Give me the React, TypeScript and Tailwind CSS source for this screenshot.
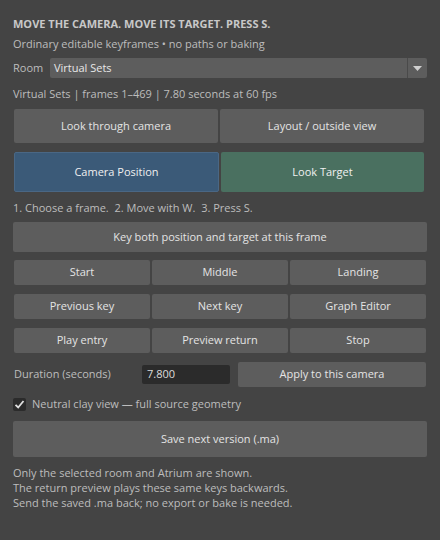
import React from "react";

const font = { fontFamily: '"Open Sans", "Noto Sans", sans-serif' };

function Btn({ children, className = "" }: { children: React.ReactNode; className?: string }) {
  return (
    <div
      className={`flex items-center justify-center rounded-[2px] bg-[#5d5d5d] text-[#e4e4e4] text-[11px] ${className}`}
    >
      {children}
    </div>
  );
}

export default function App() {
  return (
    <div
      className="w-[440px] h-[540px] bg-[#444444] pl-[13px] pr-[13px] flex flex-col text-[11px] text-[#bdbdbd] overflow-hidden"
      style={font}
    >
      <div className="mt-[16px] h-[16px] leading-[16px] font-bold text-[#c8c8c8] text-[11px]">
        MOVE THE CAMERA. MOVE ITS TARGET. PRESS S.
      </div>
      <div className="mt-[4px] h-[16px] leading-[16px]">Ordinary editable keyframes • no paths or baking</div>
      <div className="mt-[6px] h-[20px] flex items-center">
        <div className="w-[37px]">Room</div>
        <div className="flex-1 h-[20px] flex rounded-[2px] bg-[#5d5d5d]">
          <div className="flex-1 flex items-center pl-[4px] text-[#e8e8e8]">Virtual Sets</div>
          <div className="w-[20px] h-full border-l border-[#4a4a4a] flex items-center justify-center">
            <svg width="9" height="5" viewBox="0 0 9 5">
              <polygon points="0,0 9,0 4.5,5" fill="#d0d0d0" />
            </svg>
          </div>
        </div>
      </div>
      <div className="mt-[8px] h-[16px] leading-[16px]">Virtual Sets | frames 1–469 | 7.80 seconds at 60 fps</div>
      <div className="mt-[7px] flex gap-[2px] pl-[1px] pr-[3px]">
        <Btn className="flex-1 h-[34px]">Look through camera</Btn>
        <Btn className="flex-1 h-[34px]">Layout / outside view</Btn>
      </div>
      <div className="mt-[9px] flex gap-[2px] pl-[1px] pr-[3px]">
        <Btn className="flex-1 h-[40px] !bg-[#3b5a78] border border-[#4a6784] text-[#f0f0f0]">Camera Position</Btn>
        <Btn className="flex-1 h-[40px] !bg-[#4a7060] text-[#f0f0f0]">Look Target</Btn>
      </div>
      <div className="mt-[8px] h-[16px] leading-[16px]">1. Choose a frame.&nbsp; 2. Move with W.&nbsp; 3. Press S.</div>
      <Btn className="mt-[6px] h-[30px]">Key both position and target at this frame</Btn>
      <div className="mt-[8px] grid grid-cols-3 gap-[2px] pl-[1px] pr-px">
        <Btn className="h-[25px]">Start</Btn>
        <Btn className="h-[25px]">Middle</Btn>
        <Btn className="h-[25px]">Landing</Btn>
      </div>
      <div className="mt-[9px] grid grid-cols-3 gap-[2px] pl-[1px] pr-px">
        <Btn className="h-[25px]">Previous key</Btn>
        <Btn className="h-[25px]">Next key</Btn>
        <Btn className="h-[25px]">Graph Editor</Btn>
      </div>
      <div className="mt-[9px] grid grid-cols-3 gap-[2px] pl-[1px] pr-px">
        <Btn className="h-[25px]">Play entry</Btn>
        <Btn className="h-[25px]">Preview return</Btn>
        <Btn className="h-[25px]">Stop</Btn>
      </div>
      <div className="mt-[9px] h-[25px] flex items-center pl-[1px] pr-px">
        <div className="w-[128px]">Duration (seconds)</div>
        <div className="w-[88px] h-[19px] bg-[#2b2b2b] rounded-[2px] flex items-center pl-[5px] text-[#dcdcdc]">
          7.800
        </div>
        <Btn className="ml-[8px] flex-1 h-[25px]">Apply to this camera</Btn>
      </div>
      <div className="mt-[9px] h-[17px] flex items-center">
        <div className="w-[13px] h-[13px] bg-[#2b2b2b] rounded-[2px] flex items-center justify-center">
          <svg width="11" height="11" viewBox="0 0 11 11">
            <path d="M1.5 5.8 L4.2 8.5 L9.5 2" stroke="#e0e0e0" strokeWidth="1.8" fill="none" />
          </svg>
        </div>
        <div className="ml-[6px]">Neutral clay view — full source geometry</div>
      </div>
      <Btn className="mt-[8px] h-[36px]">Save next version (.ma)</Btn>
      <div className="mt-[8px] leading-[15px]">
        <div>Only the selected room and Atrium are shown.</div>
        <div>The return preview plays these same keys backwards.</div>
        <div>Send the saved .ma back; no export or bake is needed.</div>
      </div>
    </div>
  );
}
